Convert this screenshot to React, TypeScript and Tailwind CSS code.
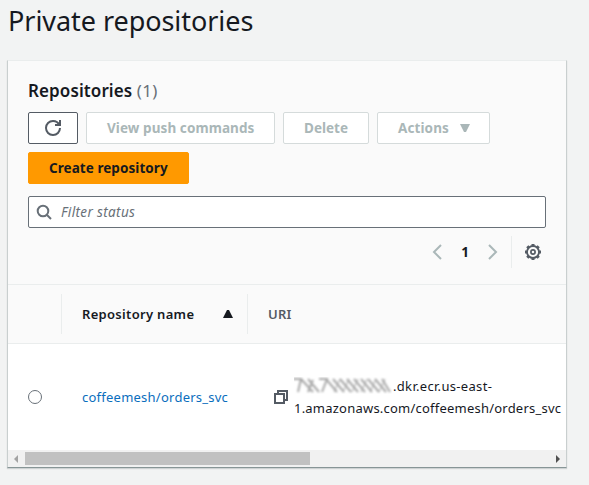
import type { ReactNode } from "react";

function Button({ children, className }: { children: ReactNode; className: string }) {
  return (
    <button className={`flex h-8 items-center rounded-[2px] border text-[13.5px] font-bold whitespace-nowrap ${className}`}>
      {children}
    </button>
  );
}

const disabled = "border-[#d5dbdb] bg-white text-[#aab7b8] pl-5";

function Toolbar() {
  return (
    <div className="flex flex-wrap gap-2">
      <Button className="w-[50px] justify-center border-[#545b64] bg-white text-[#545b64]">
        <svg width="16" height="16" viewBox="0 0 16 16" fill="none" stroke="currentColor" strokeWidth="2">
          <path d="M10 5h5V0" />
          <path d="M15 8a6.95 6.95 0 0 1-7 7 6.95 6.95 0 0 1-7-7 6.95 6.95 0 0 1 7-7 6.87 6.87 0 0 1 6.3 4" />
        </svg>
      </Button>
      <Button className={`w-[189px] ${disabled}`}><span className="tracking-[0.08px]">View push commands</span></Button>
      <Button className={`w-[86px] ${disabled}`}>Delete</Button>
      <Button className={`w-[113px] ${disabled}`}>
        <span className="w-[62px] text-left tracking-[0.1px]">Actions</span>
        <svg width="10" height="8" viewBox="0 0 10 8" fill="currentColor"><path d="M0 0h10L6 8H4z" /></svg>
      </Button>
      <Button className="w-[161px] border-[#ff9900] bg-[#ff9900] pl-5 text-[#16191f]"><span className="tracking-[0.06px]">Create repository</span></Button>
    </div>
  );
}

function Pagination() {
  return (
    <div className="mt-2 flex h-8 items-center justify-end text-[#aab7b8]">
      <svg width="10" height="16" viewBox="0 0 10 16" fill="none" stroke="currentColor" strokeWidth="2"><path d="M9 1 2 8l7 7" /></svg>
      <span className="w-[46px] pt-px text-center text-[13.5px] font-bold text-[#16191f]">1</span>
      <svg width="10" height="16" viewBox="0 0 10 16" fill="none" stroke="currentColor" strokeWidth="2"><path d="m1 1 7 7-7 7" /></svg>
      <div className="ml-[13px] mr-[13px] h-8 w-px bg-[#eaeded]" />
      <svg className="mr-[5px]" width="16" height="16" viewBox="0 0 16 16" fill="none" stroke="#545b64">
        <circle cx="8" cy="8" r="6" strokeWidth="1.8" />
        <path strokeWidth="3" d="M8 0v2M8 14v2M0 8h2M14 8h2M2.300 2.300l1.300 1.300M12.400 12.400l1.300 1.300M2.300 13.700l1.300-1.300M12.400 3.600l1.300-1.300" />
        <circle cx="8" cy="8" r="2.1" strokeWidth="1.7" />
      </svg>
    </div>
  );
}

export default function App() {
  return (
    <div className="h-[485px] w-[589px] overflow-hidden bg-[#f2f3f3] pl-[7px] font-['Noto_Sans','Open_Sans',sans-serif] text-[#16191f]">
      <h1 className="flex h-[60px] pt-[3px] pl-px text-[27px] leading-[36px] whitespace-nowrap">
        <span className="tracking-[-0.05px]">Private repositories</span>
      </h1>
      <main className="h-[408px] w-[560px] border border-t-[#eaeded] border-r-[#c9cfcf] border-b-[#879596] border-l-[#c9cfcf] bg-[#fafafa] shadow-[0_1px_1px_0_rgba(0,28,36,0.15)]">
        <section className="h-[223px] px-5 pt-[19px]">
          <h2 className="h-8 text-[17px] leading-[22px] font-semibold whitespace-nowrap">
            <span className="tracking-[0.1px]">Repositories</span> <span className="font-normal tracking-[0.3px] text-[#687078]">(1)</span>
          </h2>
          <Toolbar />
          <div className="mt-3 flex h-8 items-center rounded-[2px] border border-[#687078] bg-white pl-[7px] text-[#687078]">
            <svg width="16" height="16" viewBox="0 0 16 16" fill="none" stroke="currentColor" strokeWidth="2">
              <circle cx="7" cy="7" r="5.3" /><path d="m11 11 4 4" />
            </svg>
            <span className="ml-[9px] pt-px text-[13.5px] tracking-[0.36px] italic">Filter status</span>
          </div>
          <Pagination />
        </section>
        <div className="flex h-[60px] items-center border-y border-[#eaeded] text-[13px] font-semibold">
          <div className="h-10 w-[54px] border-r border-[#eaeded]" />
          <div className="flex h-10 w-[186px] items-center border-r border-[#eaeded] pl-5">
            <span className="w-[141px] pt-px tracking-[0.31px] whitespace-nowrap">Repository name</span>
            <svg width="10" height="8" viewBox="0 0 10 8"><path d="M4 0h2l4 8H0z" fill="currentColor" /></svg>
          </div>
          <span className="pt-px pl-5 tracking-[0.2px] text-[#545b64]">URI</span>
        </div>
        <div className="flex h-[106px] items-center bg-white text-[13px]">
          <div className="ml-5 size-[14px] rounded-full border border-[#687078]" />
          <span className="ml-10 w-[192px] pt-px tracking-[0.24px] whitespace-nowrap text-[#0a6ebd]">coffeemesh/orders_svc</span>
          <svg width="14" height="14" viewBox="0 0 14 14" fill="none" stroke="#545b64" strokeWidth="2">
            <path d="M1 4h9v9H1z" /><path d="M4 4V1h9v9h-3" />
          </svg>
          <div className="ml-[6px] w-[270px] leading-[22px] whitespace-nowrap">
            <div className="flex">
              <svg width="98" height="22" viewBox="0 0 98 22">
                <defs><filter id="soft"><feGaussianBlur stdDeviation="1.2" /></filter></defs>
                <g filter="url(#soft)" fill="none" stroke="#a8a8a8" strokeWidth="2">
                  <path d="M-1 4h8L4 17M7 4l12 13M14 4l11 13M19 5l-5 12M25 4h8l-5 13M32 4l11 13M39 4l11 13M46 4l11 13M53 4l11 13M60 4l11 13M67 4l11 13M74 4l11 13M81 4l11 13M88 4l8 13" />
                  <path strokeWidth="1" d="m46 4-6 13M55 4l-6 13M64 4l-6 13M73 4l-6 13M82 4l-6 13M91 4l-6 13" />
                </g>
              </svg>
              <span className="pl-px tracking-[0.32px]">.dkr.ecr.us-east-</span>
            </div>
            <div className="tracking-[0.22px]">1.amazonaws.com/coffeemesh/orders_svc</div>
          </div>
        </div>
        <div className="flex h-[17px] items-center bg-[#f1f1f1]">
          <svg className="ml-[6px]" width="4" height="8" viewBox="0 0 4 8"><path d="M4 0v8L0 4z" fill="#a3a3a3" /></svg>
          <div className="ml-[7px] h-[13px] w-[285px] bg-[#c1c1c1]" />
          <svg className="mr-[6px] ml-auto" width="4" height="8" viewBox="0 0 4 8"><path d="M0 0v8l4-4z" fill="#505050" /></svg>
        </div>
      </main>
    </div>
  );
}
